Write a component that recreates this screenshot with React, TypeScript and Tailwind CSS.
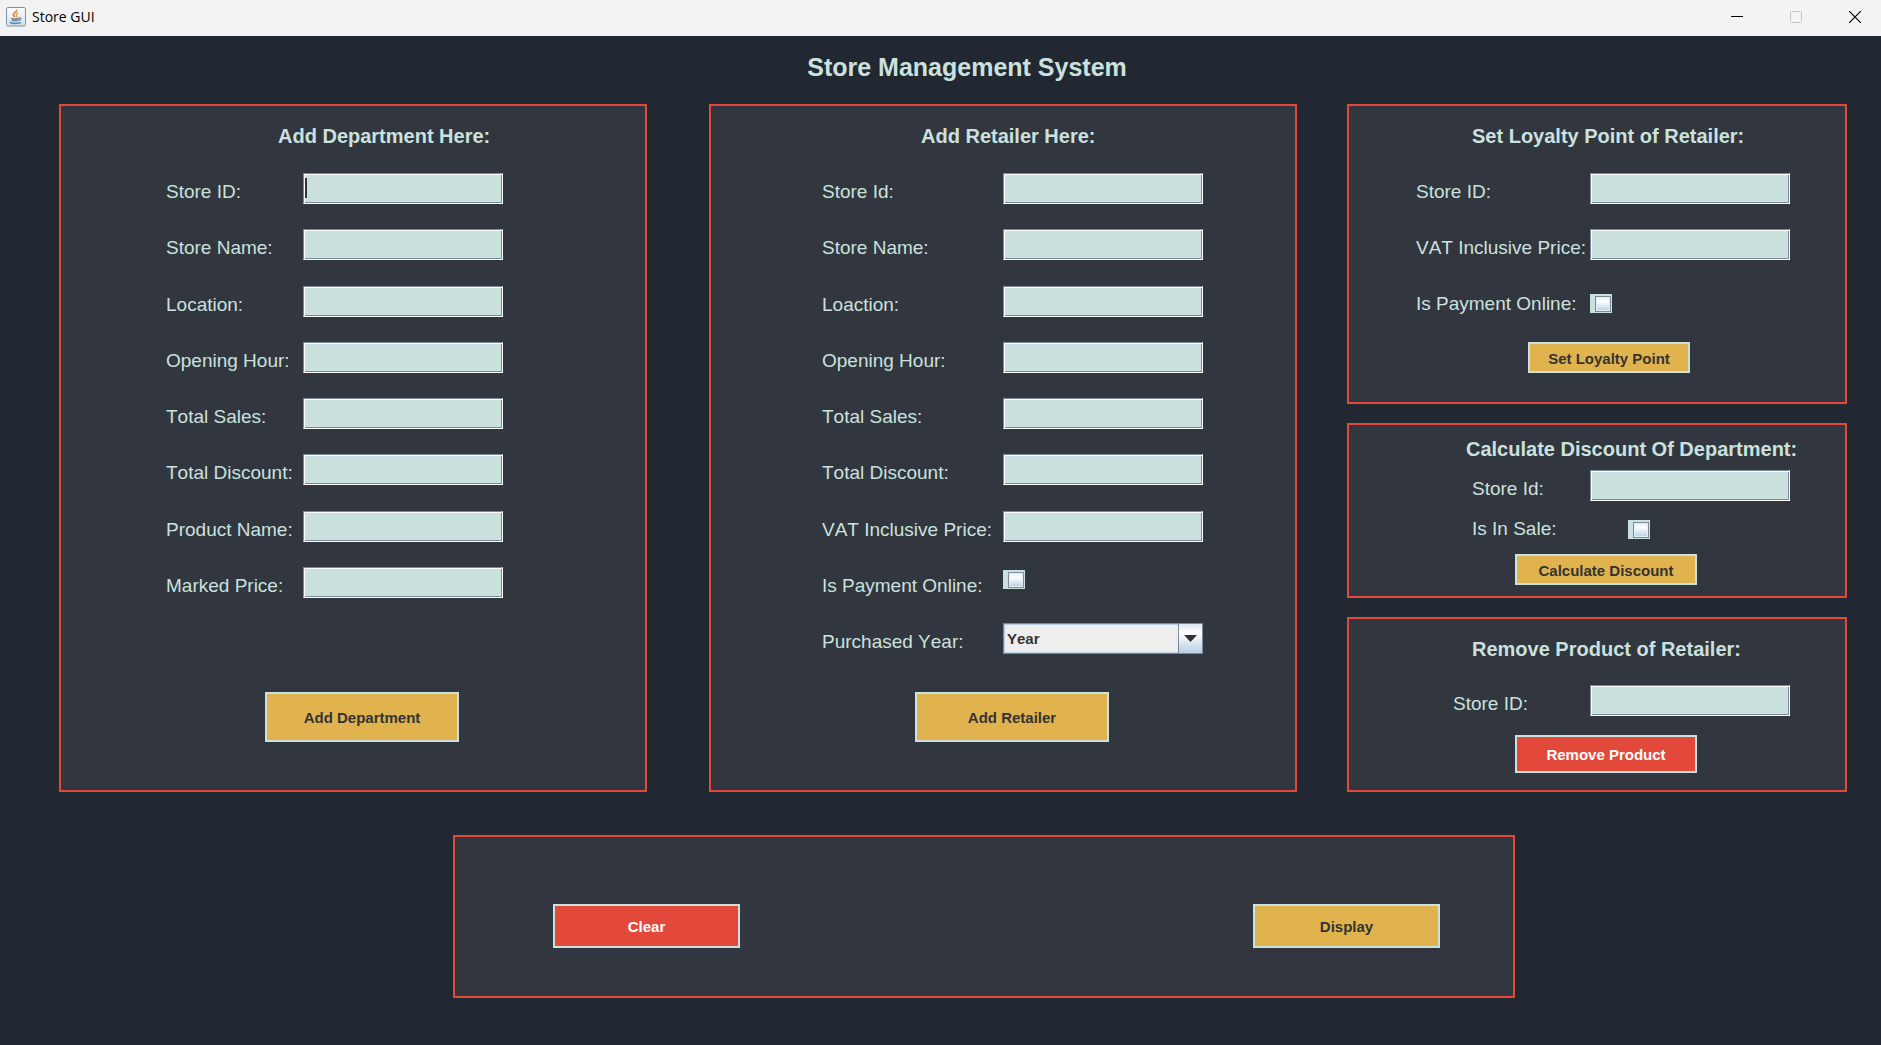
import { useId } from "react"
import type { ReactNode } from "react"

const years = ["Year", "2019", "2020", "2021", "2022", "2023", "2024"]

function JavaIcon() {
  return (
    <svg className="size-5 shrink-0" viewBox="0 0 20 20" fill="none" aria-hidden="true">
      <defs>
        <linearGradient id="java-bg" x1="0" y1="0" x2="0" y2="1">
          <stop offset="0" stopColor="#ffffff" />
          <stop offset="1" stopColor="#d5dee6" />
        </linearGradient>
      </defs>
      <rect x="0.5" y="0.5" width="19" height="18.5" rx="1.5" fill="url(#java-bg)" stroke="#7d93a6" />
      <path d="M10.8 2.600c.8 2.200-3.800 3.200-3.400 5.200.1.9 1.200 1.600 1.600 2.200" stroke="#e8862e" strokeWidth="1.8" />
      <path d="M12.4 5.600c-1.800.8-2.800 1.900-1.800 3 .5.6.2 1.100-.3 1.600" stroke="#ee9a4d" strokeWidth="1.3" />
      <path d="M5 10.600c1.700.8 6.600.8 8.200 0l-.8 3.400c-1.500.8-5 .8-6.600 0z" fill="#7295b3" />
      <path d="M13 11c2.400-.6 2.600 1.800-.4 2.500" stroke="#5a82a4" strokeWidth="1.2" />
      <path d="M4 15.4c2.400 1.600 9 1.500 11-.2" stroke="#5a82a4" strokeWidth="1.4" />
    </svg>
  )
}

function TitleBar() {
  return (
    <header className="flex h-9 items-center justify-between bg-[#f3f3f3] pr-5 pb-0.5 pl-1.5">
      <div className="flex items-center gap-1.5">
        <JavaIcon />
        <span className="font-['Open_Sans',sans-serif] text-[14px] leading-5 text-black">Store GUI</span>
      </div>
      <div className="flex items-center gap-[47px]">
        <button aria-label="Minimize" className="size-3">
          <svg className="size-3" viewBox="0 0 12 12" stroke="#000">
            <path d="M0 5.5h12" />
          </svg>
        </button>
        <button aria-label="Maximize" className="size-3" disabled>
          <svg className="size-3" viewBox="0 0 12 12" fill="none" stroke="#c4c4c4">
            <rect x="0.5" y="0.5" width="11" height="11" rx="1" />
          </svg>
        </button>
        <button aria-label="Close" className="size-3">
          <svg className="size-3" viewBox="0 0 12 12" stroke="#000" strokeWidth="1.2">
            <path d="M0 0l12 12M12 0L0 12" />
          </svg>
        </button>
      </div>
    </header>
  )
}

function Panel({ className = "", children }: { className?: string; children: ReactNode }) {
  return <section className={`border-2 border-[#e3493b] bg-[#31363f] ${className}`}>{children}</section>
}

function PanelTitle({ className = "", children }: { className?: string; children: ReactNode }) {
  return <h2 className={`text-[20px] leading-6 font-bold whitespace-nowrap ${className}`}>{children}</h2>
}

function Label({ htmlFor, width, children }: { htmlFor: string; width: string; children: ReactNode }) {
  return (
    <label htmlFor={htmlFor} className={`shrink-0 pt-[3px] text-[19px] leading-[31px] whitespace-nowrap ${width}`}>
      {children}
    </label>
  )
}

function TextRow({ label, width, caret = false }: { label: string; width: string; caret?: boolean }) {
  const id = useId()
  return (
    <div className="flex h-[31px] items-start">
      <Label htmlFor={id} width={width}>
        {label}
      </Label>
      <div className="relative">
        <input
          id={id}
          type="text"
          className="block h-[31px] w-[200px] border border-t-[#7a8a99] border-r-white border-b-white border-l-[#7a8a99] bg-[#cbe1de] px-1 text-[15px] text-[#333333] shadow-[inset_1px_1px_#ffffff,inset_-1px_-1px_#7a8a99] outline-none"
        />
        {caret && <span className="absolute top-[5px] left-[2px] h-5 w-0.5 bg-[#333333]" />}
      </div>
    </div>
  )
}

function CheckRow({ label, width, boxClass }: { label: string; width: string; boxClass: string }) {
  const id = useId()
  return (
    <div className="flex h-[31px] items-start">
      <Label htmlFor={id} width={width}>
        {label}
      </Label>
      <span className={`flex bg-[#cbe1de] pt-[2px] pr-px pb-px pl-[5px] ${boxClass}`}>
        <input
          id={id}
          type="checkbox"
          className="size-4 appearance-none border border-[#7a8a99] bg-linear-to-b from-[#dde8f3] via-white via-30% to-[#b8cfe5] shadow-[inset_0_0_0_1px_#e6eef6] checked:bg-[#7a8a99]"
        />
      </span>
    </div>
  )
}

function YearRow({ width }: { width: string }) {
  const id = useId()
  return (
    <div className="flex h-[31px] items-start">
      <Label htmlFor={id} width={width}>
        Purchased Year:
      </Label>
      <div className="relative">
        <select
          id={id}
          className="block h-[31px] w-[200px] appearance-none border border-[#7a8a99] bg-[#eeeeee] pt-0.5 pl-[3px] text-[15px] font-bold text-[#333333] shadow-[inset_0_0_0_1px_#b8cfe5] outline-none"
        >
          {years.map((year) => (
            <option key={year}>{year}</option>
          ))}
        </select>
        <span className="pointer-events-none absolute inset-y-0 right-0 flex w-[25px] items-center justify-center border border-[#7a8a99] bg-linear-to-b from-[#dde8f3] via-white via-30% to-[#b8cfe5]">
          <svg className="h-[7px] w-[13px]" viewBox="0 0 13 7" fill="#333333">
            <path d="M0 0h13L6.5 7z" />
          </svg>
        </span>
      </div>
    </div>
  )
}

function Button({
  tone = "gold",
  className,
  children,
}: {
  tone?: "gold" | "red"
  className: string
  children: ReactNode
}) {
  return (
    <button
      className={`block border-2 border-[#cbe1de] pt-0.5 text-center text-[15px] leading-5 font-bold whitespace-nowrap ${
        tone === "gold" ? "bg-[#e1b34e] text-[#333333]" : "bg-[#e3493b] text-white"
      } ${className}`}
    >
      {children}
    </button>
  )
}

function DepartmentPanel() {
  const fields = [
    "Store ID:",
    "Store Name:",
    "Location:",
    "Opening Hour:",
    "Total Sales:",
    "Total Discount:",
    "Product Name:",
    "Marked Price:",
  ]
  return (
    <Panel className="pt-[18px] pb-12 pl-[105px]">
      <PanelTitle className="pl-28">Add Department Here:</PanelTitle>
      <div className="mt-[25px] flex h-[425px] flex-col justify-between">
        {fields.map((field, i) => (
          <TextRow key={field} label={field} width="w-[137px]" caret={i === 0} />
        ))}
      </div>
      <Button className="mt-[94px] ml-[99px] h-[50px] w-[194px]">Add Department</Button>
    </Panel>
  )
}

function RetailerPanel() {
  const fields = [
    "Store Id:",
    "Store Name:",
    "Loaction:",
    "Opening Hour:",
    "Total Sales:",
    "Total Discount:",
    "VAT Inclusive Price:",
  ]
  return (
    <Panel className="ml-3 pt-[18px] pb-12 pl-[111px]">
      <PanelTitle className="pl-[99px]">Add Retailer Here:</PanelTitle>
      <div className="mt-[25px] flex h-[481px] flex-col justify-between">
        {fields.map((field) => (
          <TextRow key={field} label={field} width="w-[181px]" />
        ))}
        <CheckRow label="Is Payment Online:" width="w-[181px]" boxClass="mt-[3px]" />
        <YearRow width="w-[181px]" />
      </div>
      <Button className="mt-[38px] ml-[93px] h-[50px] w-[194px]">Add Retailer</Button>
    </Panel>
  )
}

function LoyaltyPanel() {
  return (
    <Panel className="pt-[18px] pb-[29px] pl-[67px]">
      <PanelTitle className="pl-14">Set Loyalty Point of Retailer:</PanelTitle>
      <div className="mt-[25px] flex flex-col gap-[25px]">
        <TextRow label="Store ID:" width="w-[174px]" />
        <TextRow label="VAT Inclusive Price:" width="w-[174px]" />
        <CheckRow label="Is Payment Online:" width="w-[174px]" boxClass="mt-[9px]" />
      </div>
      <Button className="mt-[26px] ml-28 h-[31px] w-[162px]">Set Loyalty Point</Button>
    </Panel>
  )
}

function DiscountPanel() {
  return (
    <Panel className="pt-3 pb-[11px] pl-[117px]">
      <PanelTitle>Calculate Discount Of Department:</PanelTitle>
      <div className="mt-[9px] flex flex-col gap-[9px] pl-1.5">
        <TextRow label="Store Id:" width="w-[118px]" />
        <CheckRow label="Is In Sale:" width="w-[156px]" boxClass="mt-[10px]" />
      </div>
      <Button className="mt-[13px] ml-[49px] h-[31px] w-[182px]">Calculate Discount</Button>
    </Panel>
  )
}

function RemovePanel() {
  return (
    <Panel className="pt-[18px] pb-[17px] pl-[104px]">
      <PanelTitle className="pl-[19px]">Remove Product of Retailer:</PanelTitle>
      <div className="mt-6">
        <TextRow label="Store ID:" width="w-[137px]" />
      </div>
      <Button tone="red" className="mt-[19px] ml-[62px] h-[38px] w-[182px]">
        Remove Product
      </Button>
    </Panel>
  )
}

export default function App() {
  return (
    <div className="flex min-h-screen flex-col bg-[#222831] font-['Liberation_Sans',Arial,sans-serif] text-[#cbe1de] [font-kerning:none]">
      <TitleBar />
      <main className="pr-[34px] pb-11 pl-[59px]">
        <h1 className="pt-[15px] pl-7 text-center text-[25px] leading-8 font-bold">Store Management System</h1>
        <div className="mt-[21px] grid grid-cols-[588fr_600fr_500fr] gap-x-[50px]">
          <DepartmentPanel />
          <RetailerPanel />
          <div className="flex flex-col gap-[19px]">
            <LoyaltyPanel />
            <DiscountPanel />
            <RemovePanel />
          </div>
        </div>
        {/* Bottom actions */}
        <div className="mt-[43px] grid grid-cols-[394fr_1062fr_332fr]">
          <Panel className="col-start-2 flex justify-between pt-[67px] pr-[73px] pb-12 pl-[98px]">
            <Button tone="red" className="h-11 w-[187px]">
              Clear
            </Button>
            <Button className="h-11 w-[187px]">Display</Button>
          </Panel>
        </div>
      </main>
    </div>
  )
}
